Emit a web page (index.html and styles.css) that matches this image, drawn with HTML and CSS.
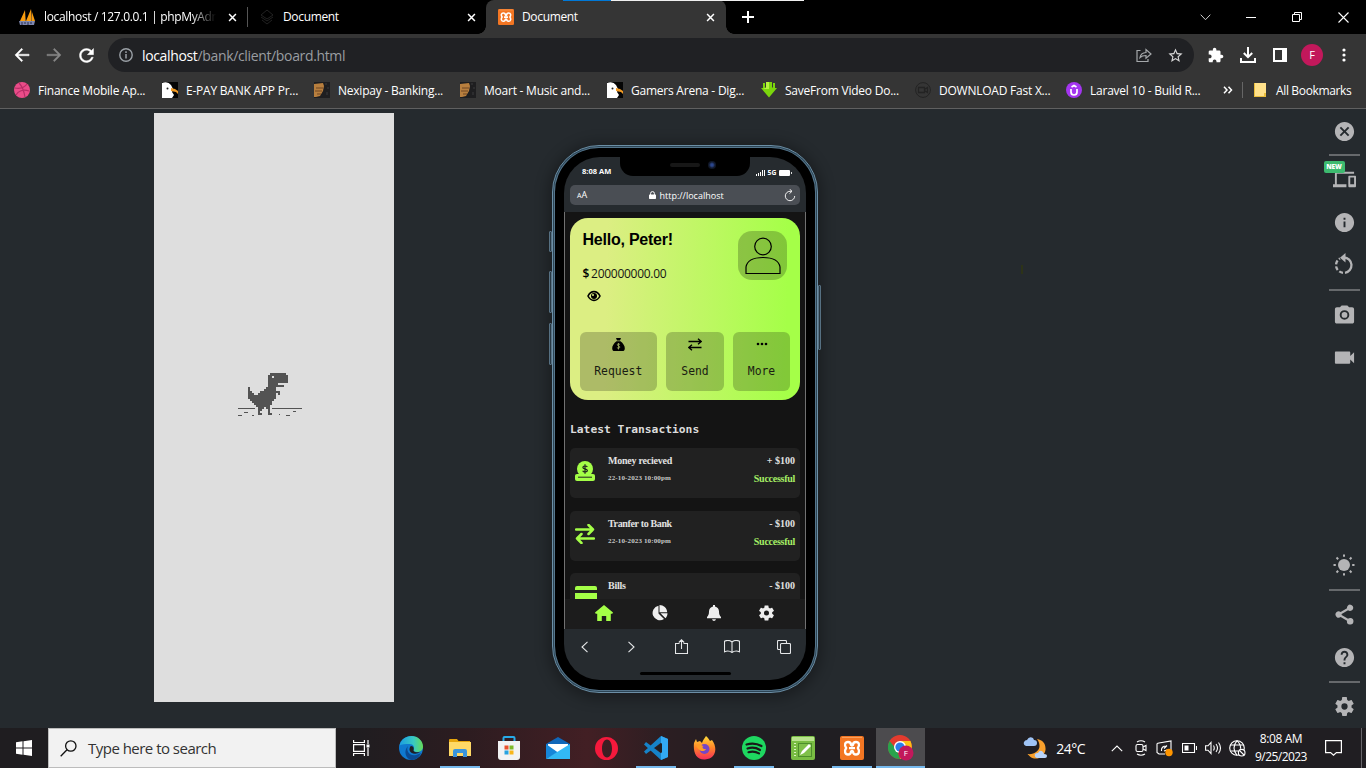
FILE: index.html
```html
<!DOCTYPE html>
<html lang="en">
<head>
<meta charset="utf-8">
<title>Document</title>
<link rel="stylesheet" href="styles.css">
</head>
<body>
<svg class="defs" width="0" height="0">
  <symbol id="x" viewBox="0 0 10 10"><path d="M1.200 1.200l7.600 7.600M8.800 1.200L1.200 8.800" stroke="#fff" stroke-width="1.700"/></symbol>
  <symbol id="eagle" viewBox="0 0 16 16"><path fill="#050505" d="M0 0h16v16H0z"/><path fill="#fff" d="M0 1q6-2 9 2l2 4-1 3 2 3-2 3H0z"/><path fill="#f19a24" d="M9 6l4 1 3 2v3l-2-2-5-1z"/><circle cx="5.500" cy="6.500" r="1" fill="#222"/></symbol>
  <symbol id="moart" viewBox="0 0 16 16"><path fill="#1e1e20" d="M0 0h16v16H0z"/><path fill="#b87f3e" d="M0 2l9-1 1 3-1 5-3 5-4 1H0z"/><path stroke="#6e4722" d="M2 6h7M1 9h7M3 12h4"/><path stroke="#3b3b3d" d="M12 1v2M14 5v2M13 10v3"/></symbol>
  <symbol id="xampp" viewBox="0 0 24 24"><rect width="24" height="24" rx="2" fill="#f37623"/><path fill="#f9a05d" d="M2 1h20v1H2z"/><path d="M8 6C5 6 4 9 6.200 12 4 15 5 18.500 8 18.500c2.200 0 3-1.300 3-3q1-1 2 0c0 1.700.8 3 3 3 3 0 4-3.500 1.800-6.500C20 9 19 6 16 6c-2.200 0-3 1.300-3 3q-1 1-2 0c0-1.700-.8-3-3-3zM9 12.200h6" fill="none" stroke="#fff" stroke-width="2.300" stroke-linejoin="round"/></symbol>
  <symbol id="swap" viewBox="0 0 20 20"><path d="M1 5.500h17M13.500 1l4.500 4.500L13.500 10M19 14.500H2M6.500 10L2 14.500 6.500 19" fill="none" stroke="currentColor" stroke-width="2.500" stroke-linejoin="round" stroke-linecap="round"/></symbol>
  <symbol id="gear" viewBox="2.500 2.300 19 19.400"><path d="M19.140 12.940c.04-.3.06-.61.06-.94 0-.32-.02-.64-.07-.94l2.030-1.580c.18-.14.23-.41.12-.61l-1.920-3.320c-.12-.22-.37-.29-.59-.22l-2.390.96c-.5-.38-1.030-.7-1.620-.94l-.36-2.540c-.04-.24-.24-.41-.48-.41h-3.840c-.24 0-.43.17-.47.41l-.36 2.540c-.59.24-1.130.57-1.620.94l-2.390-.96c-.22-.08-.47 0-.59.22L2.740 8.870c-.12.21-.08.47.12.61l2.030 1.580c-.05.3-.09.63-.09.94s.02.64.07.94l-2.030 1.580c-.18.14-.23.41-.12.61l1.920 3.320c.12.22.37.29.59.22l2.390-.96c.5.38 1.030.7 1.620.94l.36 2.540c.05.24.24.41.48.41h3.840c.24 0 .44-.17.47-.41l.36-2.540c.59-.24 1.130-.56 1.620-.94l2.390.96c.22.08.47 0 .59-.22l1.920-3.320c.12-.22.07-.47-.12-.61l-2.010-1.580zM12 15.200a3.200 3.200 0 1 1 0-6.400 3.200 3.200 0 0 1 0 6.400z" fill="currentColor"/></symbol>
</svg>

<header class="tabs">
  <div class="tab first">
    <svg width="17" height="17" viewBox="0 0 17 17"><path fill="#f89c0e" d="M6 1L1 12h5zM12 0L7 12h6zM13 3l3 9h-3z"/><path fill="#8d6a35" d="M6 1v11h1zM12 0v12h1z"/><path fill="#7d86ad" d="M0 12h16l-1 4H1z"/><path stroke="#262b4f" d="M3 13v3M6 13v2M9 13v3M12 13v2"/></svg>
    <span class="tab-title fade">localhost / 127.0.0.1 | phpMyAdmin</span><svg class="close" width="9" height="9"><use href="#x"/></svg>
  </div>
  <div class="tab second">
    <svg width="16" height="16" viewBox="0 0 16 16" fill="none" stroke="#222"><path d="M8 1l6 5-6 4-6-4zM2 8l6 4 6-4M3 11l5 4 5-4"/></svg>
    <span class="tab-title">Document</span><svg class="close" width="9" height="9"><use href="#x"/></svg>
  </div>
  <div class="tab active">
    <svg width="16" height="16"><use href="#xampp"/></svg>
    <span class="tab-title">Document</span><svg class="close" width="9" height="9"><use href="#x"/></svg>
  </div>
  <svg class="plus" width="12" height="12" viewBox="0 0 12 12"><path d="M6 0v12M0 6h12" stroke="#fff" stroke-width="2"/></svg>
  <div class="winbtns">
    <svg width="11" height="7" viewBox="0 0 11 7"><path d="M.7.7l4.800 5L10.300.7" fill="none" stroke="#ccc"/></svg>
    <svg width="10" height="10"><path d="M0 5.500h10" stroke="#fff"/></svg>
    <svg width="10" height="10"><path d="M.5 2.500h7v7h-7zM2.500 2.500v-2h7v7h-2" fill="none" stroke="#fff"/></svg>
    <svg width="11" height="11"><path d="M.5.5l10 10M10.500.5l-10 10" stroke="#fff" stroke-width="1.100"/></svg>
  </div>
  <i class="load"></i>
</header>

<div class="toolbar">
  <svg width="20" height="20" viewBox="0 0 24 24" fill="#fff"><path stroke="#fff" stroke-width=".5" d="M20.500 11H7.200l5.700-5.590L11.500 4l-8 8 8 8 1.410-1.410L7.200 13h13.300z"/></svg>
  <svg width="20" height="20" viewBox="0 0 24 24" fill="#868686"><path stroke="#868686" stroke-width=".4" d="M3.500 11h13.300l-5.700-5.590L12.500 4l8 8-8 8-1.410-1.410L16.800 13H3.500z"/></svg>
  <svg width="21" height="21" viewBox="0 0 24 24" fill="#fff"><path stroke="#fff" stroke-width=".5" d="M17.650 6.350C16.200 4.900 14.210 4 12 4c-4.420 0-7.990 3.580-7.990 8s3.570 8 7.990 8c3.730 0 6.840-2.550 7.730-6h-2.080c-.82 2.330-3.040 4-5.650 4-3.310 0-6-2.690-6-6s2.690-6 6-6c1.660 0 3.140.69 4.220 1.780L13 11h7V4l-2.350 2.350z"/></svg>
  <div class="omnibox">
    <svg width="14" height="14" viewBox="0 0 14 14"><circle cx="7" cy="7" r="6.200" fill="none" stroke="#9aa0a6" stroke-width="1.400"/><path d="M7 6v4.500M7 3.300v1.600" stroke="#9aa0a6" stroke-width="1.500"/></svg>
    <p class="url"><b>localhost</b>/bank/client/board.html</p>
    <svg class="send" width="16" height="14" viewBox="0 0 16 14"><path d="M4.500 2.500H1v11h11V11M4 9.500c.5-3 2.500-4.800 6-5V1.500L15 6l-5 4.300V7.500C7 7.500 5.500 8 4 9.500z" fill="none" stroke="#a5a8ab" stroke-width="1.200"/></svg>
    <svg class="star" width="17" height="17" viewBox="0 0 24 24" fill="#d6d6d6"><path d="M22 9.240l-7.190-.62L12 2 9.190 8.630 2 9.240l5.460 4.730L5.820 21 12 17.270 18.180 21l-1.630-7.030L22 9.240zM12 15.400l-3.760 2.270 1-4.280-3.320-2.880 4.380-.38L12 6.100l1.710 4.040 4.380.38-3.320 2.880 1 4.280L12 15.400z"/></svg>
  </div>
  <svg width="16" height="16" viewBox="1 0 23 23" fill="#fff"><path d="M20.500 11H19V7c0-1.100-.9-2-2-2h-4V3.500C13 2.120 11.880 1 10.500 1S8 2.120 8 3.500V5H4c-1.100 0-1.990.9-1.990 2v3.800H3.500c1.490 0 2.700 1.210 2.700 2.700s-1.210 2.700-2.700 2.700H2V20c0 1.100.9 2 2 2h3.800v-1.500c0-1.490 1.210-2.700 2.700-2.700 1.490 0 2.700 1.210 2.700 2.700V22H17c1.100 0 2-.9 2-2v-4h1.500c1.380 0 2.500-1.120 2.500-2.500S21.880 11 20.500 11z"/></svg>
  <svg width="16" height="16" viewBox="0 0 16 16"><path d="M8 0v10M3.800 6L8 10.200 12.200 6M1 11v4h14v-4" fill="none" stroke="#fff" stroke-width="2"/></svg>
  <svg width="14" height="14"><path fill="#fff" fill-rule="evenodd" d="M0 0h14v14H0zM2 2v10h7V2z"/></svg>
  <span class="avatar">F</span>
  <svg width="4" height="14" fill="#fff"><circle cx="2" cy="2" r="1.600"/><circle cx="2" cy="7" r="1.600"/><circle cx="2" cy="12" r="1.600"/></svg>
</div>

<nav class="bookmarks">
  <a><svg width="16" height="16" viewBox="0 0 16 16"><circle cx="8" cy="8" r="8" fill="#ea4c89"/><path d="M1 6c5 1 9 0 12-4M2 13c2-4 7-6 13-4M5 1c4 4 5 8 6 14" fill="none" stroke="#b62d66" stroke-width="1.200"/></svg><span>Finance Mobile Ap...</span></a>
  <a><svg width="16" height="16"><use href="#eagle"/></svg><span>E-PAY BANK APP Pr...</span></a>
  <a><svg width="16" height="16"><use href="#moart"/></svg><span>Nexipay - Banking...</span></a>
  <a><svg width="16" height="16"><use href="#moart"/></svg><span>Moart - Music and...</span></a>
  <a><svg width="16" height="16"><use href="#eagle"/></svg><span>Gamers Arena - Dig...</span></a>
  <a><svg width="16" height="16" viewBox="0 0 16 16"><path fill="#7bd60c" d="M4.500 0h7v6H16l-8 9.500L0 6h4.500z"/><path fill="#b6f23d" d="M5 0h3v7H2l2-1h1z"/><path stroke="#353535" d="M4.500 0v5M11.500 0v5"/><path fill="#7bd60c" d="M2 1h2v5H2zM12 1h2v5h-2z"/></svg><span>SaveFrom Video Do...</span></a>
  <a><svg width="16" height="16" viewBox="0 0 16 16" fill="none" stroke="#232323"><circle cx="8" cy="8" r="7.400"/><path stroke-width="1.300" d="M3.500 5.500h6v5h-6zM9.500 7.500l3-2v5l-3-2"/></svg><span>DOWNLOAD Fast X...</span></a>
  <a><svg width="16" height="16" viewBox="0 0 16 16"><circle cx="8" cy="8" r="8" fill="#a435f0"/><path d="M5 7v3c0 4 6 4 6 0V7M5.500 5L8 3.500 10.500 5" fill="none" stroke="#fff" stroke-width="1.700"/></svg><span>Laravel 10 - Build R...</span></a>
  <svg class="more" width="10" height="8" viewBox="0 0 10 8"><path d="M1 .8L4 4 1 7.200M5.500.8L8.500 4l-3 3.200" fill="none" stroke="#fff" stroke-width="1.500"/></svg>
  <a class="all"><svg width="12" height="14" viewBox="0 0 12 14"><path fill="#ffe18a" d="M0 0h12v14H0z"/><path fill="#e9bd3c" d="M0 0h1v14H0zM10 10h2v4h-2zM0 13h12v1H0z"/></svg><span>All Bookmarks</span></a>
</nav>

<main class="stage">
  <section class="offline">
    <svg width="64" height="44" viewBox="0 0 64 44" shape-rendering="crispEdges" fill="#535353">
      <g transform="translate(10 0) scale(2)"><path d="M11 0h8v1h-8zM10 1h10v4H10zM10 5h5v1h-5zM10 6h8v1h-8zM9 7h5v1H9zM0 7h1v2H0zM8 8h6v1H8zM0 9h2v1H0zM6 9h10v1H6zM0 10h3v1H0zM5 10h9v1H5zM15 10h1v1h-1zM0 11h14v2H0zM1 13h12v1H1zM2 14h10v1H2zM3 15h9v1H3zM4 16h7v1H4zM5 17h3v1H5zM9 17h2v1H9zM5 18h2v1H5zM10 18h1v2h-1zM5 19h1v1H5zM5 20h2v1H5zM10 20h2v1h-2z"/><path fill="#dedede" d="M12 1.500h1v1h-1z"/></g>
      <path d="M0 35h17v1H0zM34 35h30v1H34zM6 39h4v1H6zM55 38h3v1h-3zM0 42h4v1H0zM14 42h2v1h-2zM41 41h1v1h-1zM48 42h4v1h-4z"/>
    </svg>
  </section>

  <section class="phone">
    <i class="side l1"></i><i class="side l2"></i><i class="side l3"></i><i class="side r1"></i>
    <div class="screen">
      <div class="status">
        <span class="time">8:08 AM</span>
        <span class="notch"><i class="speaker"></i><i class="lens"></i></span>
        <span class="signal"><svg width="9" height="6"><path fill="#fff" d="M0 4h1v2H0zM2 3h1v3H2zM4 2h1v4H4zM6 0h1v6H6zM8 0h1v6H8z"/></svg><b>5G</b><svg width="13" height="6" viewBox="0 0 13 6"><rect width="11" height="6" rx="1" fill="#fff"/><path stroke="#ddd" d="M12.500 2v2"/></svg></span>
      </div>
      <div class="addr">
        <span class="aa"><small>A</small>A</span>
        <span class="host"><svg width="7" height="8" viewBox="0 0 7 8"><rect y="3.500" width="7" height="4.500" rx=".7" fill="#fff"/><path d="M1.600 4V2.500a1.900 1.900 0 0 1 3.800 0V4" fill="none" stroke="#fff"/></svg>http://localhost</span>
        <svg width="12" height="13" viewBox="0 0 12 13"><path d="M8 2.300H6a4.700 4.700 0 1 0 4.700 4.700M5.500 0L8 2.300 5.500 4.600" fill="none" stroke="#eee"/></svg>
      </div>
      <div class="page">
        <div class="content">
          <div class="card">
            <div class="card-head">
              <div>
                <h1>Hello, Peter!</h1>
                <p class="amount"><b>$</b>200000000.00</p>
                <svg class="eye" width="14" height="12" viewBox="0 0 14 12"><path d="M1 6c2.800-5.800 9.200-5.800 12 0-2.800 5.800-9.200 5.800-12 0z" fill="none" stroke="#000" stroke-width="1.600"/><circle cx="7" cy="6" r="3" /><circle cx="6" cy="5" r="1" fill="#dcee82"/></svg>
              </div>
              <div class="photo"><svg width="36" height="38" viewBox="0 0 36 38" fill="none" stroke="#000" stroke-width="1.200"><circle cx="18" cy="9.500" r="8.300"/><path d="M1 36.500V30c1-6 7-9.500 17-9.500S34 24 35 30v6.500z"/></svg></div>
            </div>
            <div class="actions">
              <div><svg width="13" height="13" viewBox="0 0 13 13"><path d="M4 0h5L8 2.500H5zM4.500 3.200h4C11 5 13 8 12.800 10.500 12.600 12.500 12 13 10.500 13h-8C1 13 .4 12.500.2 10.500 0 8 2 5 4.500 3.200z"/><path d="M8 6.500C6.500 5.500 5 6 5.200 7s2.700.8 2.700 2-1.900 1.600-3 .6M6.500 5v6.500" fill="none" stroke="#a8b96a" stroke-width=".8"/></svg><span>Request</span></div>
              <div><svg width="14" height="13" viewBox="0 0 14 13"><path d="M.5 3.500h12.700M10 .7l3.200 2.800L10 6.300M13.500 9.500H.8M4 6.700L.8 9.500 4 12.300" fill="none" stroke="#000" stroke-width="1.300"/></svg><span>Send</span></div>
              <div><svg width="12" height="12"><circle cx="2" cy="6" r="1.300"/><circle cx="6" cy="6" r="1.300"/><circle cx="10" cy="6" r="1.300"/></svg><span>More</span></div>
            </div>
          </div>
          <h2>Latest Transactions</h2>
          <div class="tx">
            <svg width="20" height="20" viewBox="0 0 20 20"><path fill="#a4ff47" d="M0 14.500Q0 13 2 13h16q2 0 2 1.500V18q0 2-2 2H2q-2 0-2-2z"/><circle cx="10" cy="8" r="8" fill="#a4ff47"/><path stroke="#212121" d="M3 16.200h14"/><path d="M12.300 6c-.8-1.500-4.400-1.300-4.400.4 0 1.800 4.500 1.100 4.500 3.200 0 1.800-4 1.900-4.700.1M10 3.300v9.400" fill="none" stroke="#212121" stroke-width="1.200"/></svg>
            <p><b>Money recieved</b><small>22-10-2023 10:00pm</small></p><p class="sum"><b>+ $100</b><em>Successful</em></p>
          </div>
          <div class="tx">
            <svg class="lime" width="20" height="20"><use href="#swap"/></svg>
            <p><b class="t2">Tranfer to Bank</b><small>22-10-2023 10:00pm</small></p><p class="sum"><b>- $100</b><em>Successful</em></p>
          </div>
          <div class="tx last">
            <svg width="22" height="18" viewBox="0 0 22 18" fill="#a4ff47"><path d="M0 4V2q0-2 2-2h18q2 0 2 2v2zM0 7h22v9q0 2-2 2H2q-2 0-2-2z"/></svg>
            <p><b>Bills</b></p><p class="sum"><b>- $100</b></p>
          </div>
        </div>
        <div class="dock">
          <svg width="18" height="16" viewBox="0 0 18 16" fill="#a4ff47"><path d="M9 0l9 7.500-.7 1.200h-1.500V16h-4.600v-5H6.800v5H2.200V8.700H.7L0 7.500z"/></svg>
          <svg width="17" height="16" viewBox="0 0 17 16" fill="#eee"><path d="M7.500.8V8.500l5.500 5.500A7.300 7.300 0 1 1 7.500.8zM8.500 0C12.500 0 16 3 16.200 7.300H8.500zM9.500 8.300h7c0 2-.8 3.700-2 5z"/></svg>
          <svg width="14" height="16" viewBox="0 0 14 16" fill="#eee"><path d="M6 0h2v1.400C10.500 2 12 4 12 6.500c0 3 .7 4 2 5.500v1.300H0V12c1.300-1.500 2-2.500 2-5.500C2 4 3.500 2 6 1.400zM5 14.200h4Q8.500 16 7 16t-2-1.800z"/></svg>
          <svg class="pale" width="15" height="16"><use href="#gear"/></svg>
        </div>
      </div>
      <div class="safari">
        <svg width="7" height="12"><path d="M6.500.8L1 6l5.500 5.200"/></svg>
        <svg width="7" height="12"><path d="M.5.8L6 6 .5 11.200"/></svg>
        <svg width="13" height="15"><path d="M4.500 4.500h-4v10h12v-10h-4M6.500 10V1M3.800 3.500L6.500.8l2.700 2.700"/></svg>
        <svg width="16" height="13"><path d="M8 2C6 .3 2.500.3.500 1.200v10.600c2-.9 5.500-.8 7.500.7 2-1.500 5.500-1.600 7.500-.7V1.200C13.500.3 10 .3 8 2zm0 0v10.500"/></svg>
        <svg width="14" height="14"><rect x="3.500" y="3.500" width="10" height="10" rx="1"/><path d="M3.500 9.500h-2q-1 0-1-1v-7q0-1 1-1h7q1 0 1 1v2"/></svg>
      </div>
      <i class="homebar"></i>
    </div>
  </section>

  <i class="speck"></i>

  <aside class="rail">
    <svg width="23" height="23" viewBox="0 0 24 24"><path d="M12 2C6.470 2 2 6.470 2 12s4.470 10 10 10 10-4.470 10-10S17.530 2 12 2zm5 13.590L15.590 17 12 13.410 8.410 17 7 15.590 10.590 12 7 8.410 8.410 7 12 10.590 15.590 7 17 8.410 13.410 12 17 15.590z"/></svg>
    <hr>
    <div class="dev"><svg width="23" height="23" viewBox="0 0 24 24"><path d="M4 6h18V4H4c-1.100 0-2 .9-2 2v11H0v3h14v-3H4V6zm19 2h-6c-.55 0-1 .45-1 1v10c0 .55.45 1 1 1h6c.55 0 1-.45 1-1V9c0-.55-.45-1-1-1zm-1 9h-4v-7h4v7z"/></svg><span class="new">NEW</span></div>
    <svg width="23" height="23" viewBox="0 0 24 24"><path d="M12 2C6.480 2 2 6.480 2 12s4.480 10 10 10 10-4.480 10-10S17.520 2 12 2zm1 15h-2v-6h2v6zm0-8h-2V7h2v2z"/></svg>
    <svg class="rotate" width="20" height="22" viewBox="0 0 20 22"><path d="M10 4.500a7.700 7.700 0 0 1 1 15.300" fill="none" stroke="#b4b4b6" stroke-width="2.300"/><path d="M9 19.800A7.700 7.700 0 0 1 6 5.400" fill="none" stroke="#b4b4b6" stroke-width="2.300" stroke-dasharray="4 2"/><path d="M11.500 0v9.500L6 4.700z"/></svg>
    <hr>
    <svg width="23" height="23" viewBox="0 0 24 24"><circle cx="12" cy="12.500" r="3"/><path d="M9 2.500L7.200 4.500H4c-1.100 0-2 .9-2 2v13c0 1.100.9 2 2 2h16c1.100 0 2-.9 2-2v-13c0-1.100-.9-2-2-2h-3.200L15 2.500zm3 15a5 5 0 1 1 0-10 5 5 0 0 1 0 10z" fill-rule="evenodd"/></svg>
    <svg width="23" height="23" viewBox="0 0 24 24"><path d="M18 10.500V7c0-.6-.4-1.200-1-1.200H3c-.6 0-1 .6-1 1.200v10.500c0 .6.400 1 1 1h14c.6 0 1-.4 1-1V14l4 4V6.500z"/></svg>
    <i></i>
    <svg width="22" height="22" viewBox="0 0 22 22"><circle cx="11" cy="11" r="6"/><g stroke="#b4b4b6" stroke-width="2"><path d="M11 .5v2.300M11 19.200v2.300M.5 11h2.300M19.200 11h2.300M3.500 3.500l1.700 1.700M16.800 16.800l1.700 1.700M3.500 18.500l1.700-1.700M16.800 5.200l1.700-1.700"/></g></svg>
    <hr>
    <svg width="23" height="23" viewBox="0 0 24 24"><path d="M18 15.600c-.9 0-1.700.35-2.300.9L9 12.600v-1.200l6.700-3.900a3.300 3.300 0 1 0-1.100-1.900L8 9.400a3.300 3.300 0 1 0 0 5.200l6.600 3.800a3.400 3.400 0 1 0 3.400-2.800z"/></svg>
    <svg width="23" height="23" viewBox="0 0 24 24"><path d="M12 2C6.480 2 2 6.480 2 12s4.480 10 10 10 10-4.480 10-10S17.520 2 12 2zm1 17h-2v-2h2v2zm2.070-7.750l-.9.920C13.450 12.900 13 13.500 13 15h-2v-.5c0-1.100.45-2.100 1.170-2.830l1.240-1.260c.37-.36.59-.86.59-1.410 0-1.100-.9-2-2-2s-2 .9-2 2H8c0-2.210 1.790-4 4-4s4 1.790 4 4c0 .88-.36 1.680-.93 2.250z"/></svg>
    <hr>
    <svg class="railgear" width="19" height="19"><use href="#gear"/></svg>
  </aside>
</main>

<footer class="taskbar">
  <div class="app"><svg width="16" height="16" viewBox="0 0 16 16" fill="#fff"><path d="M0 2.200l6.500-.9v6.200H0zM7.500 1.200L16 0v7.500H7.500zM0 8.500h6.500v6.200L0 13.800zM7.500 8.500H16V16l-8.500-1.200z"/></svg></div>
  <div class="search"><svg width="17" height="17" viewBox="0 0 17 17" fill="none" stroke="#111" stroke-width="1.300"><circle cx="10.800" cy="6" r="5.200"/><path d="M7 9.800L.7 16.200"/></svg><span>Type here to search</span></div>
  <div class="app"><svg width="17" height="16" viewBox="0 0 17 16" fill="none" stroke="#fff" stroke-width="1.200"><path d="M.6 0v2.500h10.800V0M.6 16v-2.500h10.800V16M.6 4.700h10.800v6.600H.6zM15 0v4M15 8v8"/><path d="M13.500 4.500h3v3h-3z" fill="#fff" stroke="none"/></svg></div>
  <div class="app"><svg width="24" height="24" viewBox="0 0 24 24"><defs><linearGradient id="e1"><stop offset="0" stop-color="#1b9de2"/><stop offset=".6" stop-color="#39c9c1"/><stop offset="1" stop-color="#67dc55"/></linearGradient></defs><circle cx="12" cy="12" r="12" fill="#0f79cf"/><path fill="url(#e1)" d="M.5 9.500C2 3.500 7 0 12.500 0 19 0 24 5 24 10.500c0 4-3 5.500-6 5.500-2.500 0-4-1-3.500-2 1.500-2.500 0-6-4-6-4 0-8 0-10 1.500z"/><path fill="#0b4a92" d="M9 10c-2.500 5 2 10.500 8 9 2-.4 4-1.500 5-2-2 5-6 7-10 7-5-1-8-9-3-14z"/><path fill="#201e22" d="M12 10c3 0 3 3 2.500 4.500 0 1.500 4 2.500 6.500 1.200-3 3.300-10 2.300-10.500-1.700 0-2 .5-3.500 1.500-4z"/></svg></div>
  <div class="app run"><svg width="22" height="18" viewBox="0 0 22 18"><path fill="#e6a50c" d="M0 1q0-1 1-1h7l1.500 2H21v3H0z"/><path fill="#ffd966" d="M0 3h22v14H0z"/><path fill="#3a95dc" d="M4 18v-6q0-2 2-2h10q2 0 2 2v6h-4v-4H8v4z"/></svg></div>
  <div class="app"><svg width="24" height="24" viewBox="0 0 24 24"><path fill="none" stroke="#27aae8" stroke-width="2" d="M6.500 6V2q0-1 1-1h9q1 0 1 1v4"/><path fill="#f1f2f3" d="M1 5h22v16q0 3-3 3H4q-3 0-3-3z"/><path fill="#e8502c" d="M7.500 9.500h4v4h-4z"/><path fill="#7cb928" d="M12.500 9.500h4v4h-4z"/><path fill="#26a2e0" d="M7.500 14.500h4v4h-4z"/><path fill="#f8b61a" d="M12.500 14.500h4v4h-4z"/></svg></div>
  <div class="app"><svg width="24" height="22" viewBox="0 0 24 22"><path fill="#1067b9" d="M12 0l12 7v3H0V7z"/><path fill="#fff" d="M2 7h20v9H2z"/><path fill="#1686d9" d="M0 7l12 8.500L0 22z"/><path fill="#32b8f5" d="M24 7v15H0z"/></svg></div>
  <div class="app"><svg width="23" height="23" viewBox="0 0 23 23"><path fill="#f5193c" fill-rule="evenodd" d="M11.500 0a11.500 11.500 0 1 1 0 23 11.500 11.500 0 0 1 0-23zM12 2.500c-3 0-5 4-5 9s2 9 5 9 5-4 5-9-2-9-5-9z"/></svg></div>
  <div class="app run"><svg width="24" height="24" viewBox="0 0 24 24"><path fill="#1683c9" d="M17 0l7 3v18l-7 3L0 8.500 2 6l16 12V6L2 18 0 15.500z"/><path fill="#32a9f3" d="M17 0l7 3v18l-7 3z"/><path fill="#201e22" d="M18 7v10l-6.500-5z"/></svg></div>
  <div class="app"><svg width="23" height="24" viewBox="0 0 23 24"><defs><linearGradient id="ff" x2="0" y2="1"><stop stop-color="#ffdc3a"/><stop offset=".5" stop-color="#ff8428"/><stop offset="1" stop-color="#f52c5c"/></linearGradient></defs><path fill="url(#ff)" d="M1 7l2-4 1 3 3-1 2 2c1-3 2-4 4-7 2 2 3 3 4 5l2-1c6 8 4 19-7 19.500C3 24 0 16 1 7z"/><circle cx="11.500" cy="13" r="5" fill="#7546c7"/><path fill="#ff9c27" d="M3 9c4-2 5 1 8 1-3 0-1 4 2 3-2 4-8 2-10-4z"/></svg></div>
  <div class="app run"><svg width="24" height="24" viewBox="0 0 24 24"><circle cx="12" cy="12" r="12" fill="#1ed760"/><path d="M4.500 8.500c5-1.500 10.500-1 15 1.500M5.500 12.500c4-1.300 9-.7 12.500 1.500M6.500 16.200c3.500-1 7.500-.6 10.500 1.200" fill="none" stroke="#191919" stroke-width="2.200" stroke-linecap="round"/></svg></div>
  <div class="app"><svg width="24" height="24" viewBox="0 0 24 24"><rect width="24" height="24" rx="2" fill="#79bd43"/><path fill="#b9e38e" d="M1 1h22v4H1z"/><path stroke="#d9f3bd" stroke-width="2" stroke-dasharray="1 2" d="M4 7v15"/><path fill="#4d8e2c" d="M7 7h14v14H7z"/><path fill="#7fc04a" d="M8 8h12v12H8z"/><path d="M9 19l2-4 7-7 2 2-7 7z" fill="#fff"/></svg></div>
  <div class="app run"><svg width="24" height="24"><use href="#xampp"/></svg></div>
  <div class="app current"><svg width="26" height="26" viewBox="0 0 26 26"><circle cx="12" cy="12" r="12" fill="#e33b2e"/><path fill="#28a34c" d="M1.600 6L9 15l3 9C2 24-3 14 1.600 6z"/><path fill="#fbc116" d="M12 6h10.500c4 9-2 18-10.500 18l5-8z"/><circle cx="12" cy="12" r="6" fill="#fff"/><circle cx="12" cy="12" r="4.600" fill="#2b7de9"/><circle cx="18" cy="18" r="7.500" fill="#c2185b"/><text x="15.800" y="21.400" fill="#fff" font-size="8" font-family="Open Sans, sans-serif">F</text></svg></div>
  <div class="weather"><svg width="25" height="23" viewBox="0 0 25 23"><path fill="#f9a02c" d="M14 2c6 1 9 5 8.500 11-1 7-9 11-15 7l-3-3c6 1 12-3 12-8 0-3-1-5-2.500-7z"/><path fill="#9fc3f5" d="M3 9q-3-1-2-4 1-2 3-2 2-4 6-2l1 2q3 0 3 3 0 3-3 3z"/><path fill="#b9d4fa" d="M14 21q-3-1-2-4 1-1 3-1 2-4 5-1l1 2q3 0 3 2 0 2-2 2z"/></svg><span>24°C</span></div>
  <div class="tray">
    <svg width="12" height="7"><path d="M.8 6.200L6 1l5.200 5.200"/></svg>
    <svg width="12" height="16"><rect x="1" y="4.500" width="7" height="7" rx="1.500"/><path d="M8 7l3-1.500v5L8 9M2 2q4-2.500 8 0M2 14q4 2.500 8 0"/></svg>
    <svg width="18" height="17" viewBox="0 0 18 17"><path d="M1 3.500l2-.5 12-2v10M1 3.500v9l2 1.500h6M5.500 11q-.5-5 5-5M8 8.500l3-3M11 10l-3 1"/><circle cx="13" cy="12.500" r="3.700" fill="#ff9500" stroke="none"/></svg>
    <svg width="15" height="10"><path d="M.5.500h12v9H.5zM14.500 3v4"/><path d="M2.500 2.500h4v5h-4z" fill="#fff" stroke="none"/></svg>
    <svg width="17" height="14"><path d="M.6 4.800H3L6 1.500v11L3 9.200H.6zM8.500 4.500q1.500 2.500 0 5M11 3q3 4 0 8M13.500 1.500q4 5.500 0 11"/></svg>
    <svg width="17" height="17"><circle cx="8" cy="8" r="7.300"/><path d="M8 .7q-6 7.300 0 14.600M8 .7q4 3.800 3.500 8M1.500 5h13M1.500 11H9"/><circle cx="12.700" cy="12.700" r="3.300" fill="#201e22"/><path d="M10.500 10.500l4.500 4.500"/></svg>
  </div>
  <div class="clock"><span>8:08 AM</span><span class="date">9/25/2023</span></div>
  <div class="app"><svg width="17" height="16"><path d="M.6.600h15.800v12h-5l-2.900 2.600-2.900-2.600h-5z" fill="none" stroke="#fff" stroke-width="1.200"/></svg></div>
  <i></i>
  <i class="peek"></i>
</footer>
</body>
</html>
```
FILE: styles.css
```css
* { box-sizing: border-box; margin: 0; padding: 0; }
body { width: 1366px; height: 768px; overflow: hidden; background: #252a2e; color: #fff; font: 12px "Open Sans", "Noto Sans", sans-serif; display: flex; flex-direction: column; }
svg { display: block; flex: none; }
.defs { position: absolute; }

.tabs { position: relative; height: 34px; background: #000; display: flex; align-items: center; }
.tab { height: 34px; display: flex; align-items: center; gap: 8px; }
.tab .close { margin-left: auto; }
.tab-title { white-space: nowrap; letter-spacing: -.34px; line-height: 16px; }
.first { width: 248px; padding: 0 11px 0 19px; position: relative; }
.first::after { content: ""; position: absolute; right: 0; top: 7px; width: 1px; height: 20px; background: #555; }
.fade { width: 172px; overflow: hidden; -webkit-mask: linear-gradient(90deg, #000 85%, transparent); mask: linear-gradient(90deg, #000 85%, transparent); }
.second { width: 238px; padding: 0 10px 0 11px; }
.active { width: 240px; padding: 0 11px 0 12px; background: #353535; border-radius: 8px 8px 0 0; position: relative; }
.active::before, .active::after { content: ""; position: absolute; bottom: 0; width: 8px; height: 8px; }
.active::before { left: -8px; background: radial-gradient(circle at 0 0, #000 7.5px, #353535 8px); }
.active::after { right: -8px; background: radial-gradient(circle at 100% 0, #000 7.5px, #353535 8px); }
.plus { margin-left: 16px; }
.winbtns { margin-left: auto; height: 28px; display: grid; grid-template-columns: repeat(4, 46px); place-items: center; }
.load { position: absolute; left: 563px; top: 0; width: 241px; height: 1px; background: linear-gradient(90deg, #0078d7 48px, #f0f0f0 48px); }

.toolbar { height: 41px; background: #353535; display: grid; grid-template-columns: 32px 32px 32px 1098px repeat(5, 32px); padding: 1px 6px 0; align-items: center; justify-items: center; }
.omnibox { justify-self: end; margin-right: 6px; width: 1086px; height: 34px; border-radius: 17px; background: #202124; display: flex; align-items: center; padding: 0 10px 0 11px; }
.url { margin-left: 9px; font-size: 14px; letter-spacing: -.35px; color: #9a9da1; white-space: nowrap; }
.url b { font-weight: 400; color: #fff; }
.send { margin-left: auto; }
.star { margin-left: 15px; }
.avatar { width: 22px; height: 22px; border-radius: 50%; background: #c2185b; text-align: center; line-height: 22px; font-size: 11px; }

.bookmarks { height: 34px; background: #353535; border-bottom: 1px solid #606060; display: grid; grid-template-columns: 148px 152px 146px 147px 154px 154px 151px 157px 19px 1fr; padding-left: 14px; padding-bottom: 3px; align-items: center; }
.bookmarks a { display: flex; align-items: center; gap: 8px; white-space: nowrap; letter-spacing: -.23px; }
.all { border-left: 1px solid #666; height: 16px; padding-left: 11px; }
.bookmarks .all { gap: 10px; letter-spacing: -.35px; }

.stage { height: 619px; display: flex; background: #252a2e; position: relative; }
.offline { width: 240px; height: 589px; margin: 4px 0 0 154px; background: #dedede; padding: 260px 0 0 84px; }
.phone { position: relative; width: 266px; height: 548px; margin: 36px 0 0 158px; border-radius: 47px; border: 1px solid #6b8ea5; background: #000; padding: 11px; box-shadow: inset 0 0 0 1px #2b4455, inset 0 0 0 2px #54748a, 0 2px 14px 4px rgba(0,0,0,.3); }
.side { position: absolute; width: 3px; background: #273742; border: 1px solid #567082; border-radius: 1px; }
.l1 { left: -4px; top: 85px; height: 21px; }
.l2 { left: -4px; top: 125px; height: 42px; }
.l3 { left: -4px; top: 177px; height: 42px; }
.r1 { right: -4px; top: 139px; height: 65px; }
.screen { width: 242px; height: 523px; border-radius: 36px; overflow: hidden; background: #262b2f; display: flex; flex-direction: column; }
.status { height: 28px; display: grid; grid-template-columns: 56px 130px 56px; }
.time { font-size: 7.500px; font-weight: 700; padding: 9px 0 0 18px; line-height: 11px; white-space: nowrap; }
.notch { height: 19px; background: #000; border-radius: 0 0 13px 13px; display: flex; align-items: center; padding-left: 50px; gap: 8px; padding-bottom: 4px; }
.speaker { width: 30px; height: 4px; border-radius: 2px; background: #171717; }
.lens { width: 8px; height: 8px; border-radius: 50%; background: radial-gradient(#2b468d 20%, #101727 55%); }
.signal { display: flex; gap: 2.500px; padding: 12px 0 0 6px; height: 20px; align-items: center; }
.signal b { font-size: 6.800px; line-height: 8px; }
.addr { margin: 0 6px; height: 20px; border-radius: 5px; background: #4a4e54; display: flex; align-items: center; justify-content: space-between; padding: 0 4px 0 7px; }
.aa { font-size: 9px; line-height: 10px; }
.aa small { font-size: 7px; }
.host { display: flex; align-items: center; gap: 4px; font-size: 9px; padding-left: 1px; }
.page { margin-top: 7px; height: 417px; border: solid #717171; border-width: 0 1px; background: #141414; display: flex; flex-direction: column; }
.content { height: 387px; overflow: hidden; padding: 6px 5px 0; }
.card { height: 182px; border-radius: 18px; background: linear-gradient(91deg, #dcee83 16%, #a5ff48 94%); color: #000; padding: 12px 10px 0 9.500px; }
.card-head { display: flex; justify-content: space-between; padding: 0 3px; height: 101.500px; }
h1 { font: 700 16px/20px "Liberation Sans", Arial, sans-serif; letter-spacing: -.23px; }
.amount { margin-top: 14px; line-height: 20px; font-size: 12px; letter-spacing: -.28px; color: #151515; white-space: nowrap; }
.amount b { color: #000; margin-right: 2px; font-weight: 600; }
.eye { margin: 6px 0 0 4px; }
.photo { width: 49px; height: 49px; margin-top: 1px; border-radius: 14px; background: rgba(0,0,0,.22); display: flex; justify-content: center; align-items: center; }
.actions { display: grid; grid-template-columns: 77.500px 58px 57px; gap: 9px; }
.actions div { height: 59px; border-radius: 6px; background: rgba(0,0,0,.21); display: flex; flex-direction: column; align-items: center; padding-top: 6px; }
.actions svg { height: 13px; }
.actions span { font: 11.400px/14px "DejaVu Sans Mono", monospace; margin-top: 13px; color: #1a1c12; }
h2 { font: 700 11.300px/16px "DejaVu Sans Mono", monospace; color: #dcdcdc; margin: 22px 0 10px; white-space: nowrap; }
.tx { height: 50px; margin-bottom: 12.500px; border-radius: 5px; background: #212121; display: grid; grid-template-columns: 33px 1fr auto; padding: 6px 5px; font: 700 10px/13px "Liberation Serif", serif; color: #e2e2e2; }
.tx > svg { margin-top: 7px; }
.tx p { display: flex; flex-direction: column; white-space: nowrap; letter-spacing: -.23px; }
.tx .t2 { letter-spacing: -.35px; }
.tx small { font-size: 7px; line-height: 11px; margin-top: 6px; color: #c8c8c8; letter-spacing: .14px; }
.tx .sum { text-align: right; letter-spacing: 0; }
.tx em { font-style: normal; color: #a6ef66; margin-top: 5px; letter-spacing: -.27px; }
.lime { color: #a4ff47; }
.dock { height: 30px; background: #1c1c1c; display: flex; align-items: center; justify-content: space-between; padding: 0 31px 3px 30px; }
.pale { color: #eee; }
.safari { height: 35px; display: flex; justify-content: space-between; align-items: center; padding: 0 15px 0 17px; }
.safari svg { fill: none; stroke: #e4e6e8; stroke-width: 1.100; }
.safari svg:nth-child(2) { margin-left: 3px; }
.safari svg:nth-child(3) { margin-left: 3px; }
.homebar { width: 91px; height: 3px; border-radius: 2px; background: #000; margin: 8px auto 0; }
.speck { position: absolute; left: 1021px; top: 156px; width: 2px; height: 9px; background: #2d3318; }

.rail { margin-left: auto; width: 44px; display: grid; grid-template-rows: 44px 3px 44px 44px 43px 6px 43px 43px 164px 44px 6px 43px 43px 5px 44px; place-items: center; fill: #b4b4b6; color: #b4b4b6; }
.rail hr { width: 31px; height: 2px; border: 0; background: #66696c; }
.dev { position: relative; padding-top: 2px; }
.rotate { margin-bottom: 3px; }
.new { position: absolute; left: -9px; top: -5px; width: 21px; height: 12px; border-radius: 2px; background: #3dba6f; color: #fff; font: 800 6.500px/12px "Open Sans", sans-serif; text-align: center; }

.taskbar { height: 40px; background: linear-gradient(90deg, #1f1d20 26%, #2c1c20 34%, #421f24 43%, #2b1e22 49%, #201e22 56%); display: grid; grid-template-columns: 48px 288px 50px repeat(11, 49px) 160px 20px 144px 64px 40px 8px 1px; grid-template-rows: 40px; }
.app { display: flex; align-items: center; justify-content: center; position: relative; }
.search { background: #f2f2f2; border: 1px solid #bcbcbc; display: flex; align-items: center; gap: 11px; padding-left: 11px; color: #333; font-size: 15px; letter-spacing: -.52px; }
.run::after, .current::after { content: ""; position: absolute; left: 5px; right: 4px; bottom: 0; height: 2px; background: #76b9ed; }
.current { background: #4c4b4e; }
.current::after { left: 0; right: 0; }
.weather { display: flex; align-items: center; justify-content: flex-end; gap: 8px; font-size: 14px; letter-spacing: -.5px; white-space: nowrap; }
.tray { grid-column: 17; display: grid; grid-template-columns: repeat(6, 24px); place-items: center; }
.tray svg { fill: none; stroke: #fff; stroke-width: 1.100; }
.clock { display: flex; flex-direction: column; align-items: center; justify-content: center; line-height: 18px; letter-spacing: -.4px; }
.date { letter-spacing: -.55px; }
.peek { background: #67656a; }
```
